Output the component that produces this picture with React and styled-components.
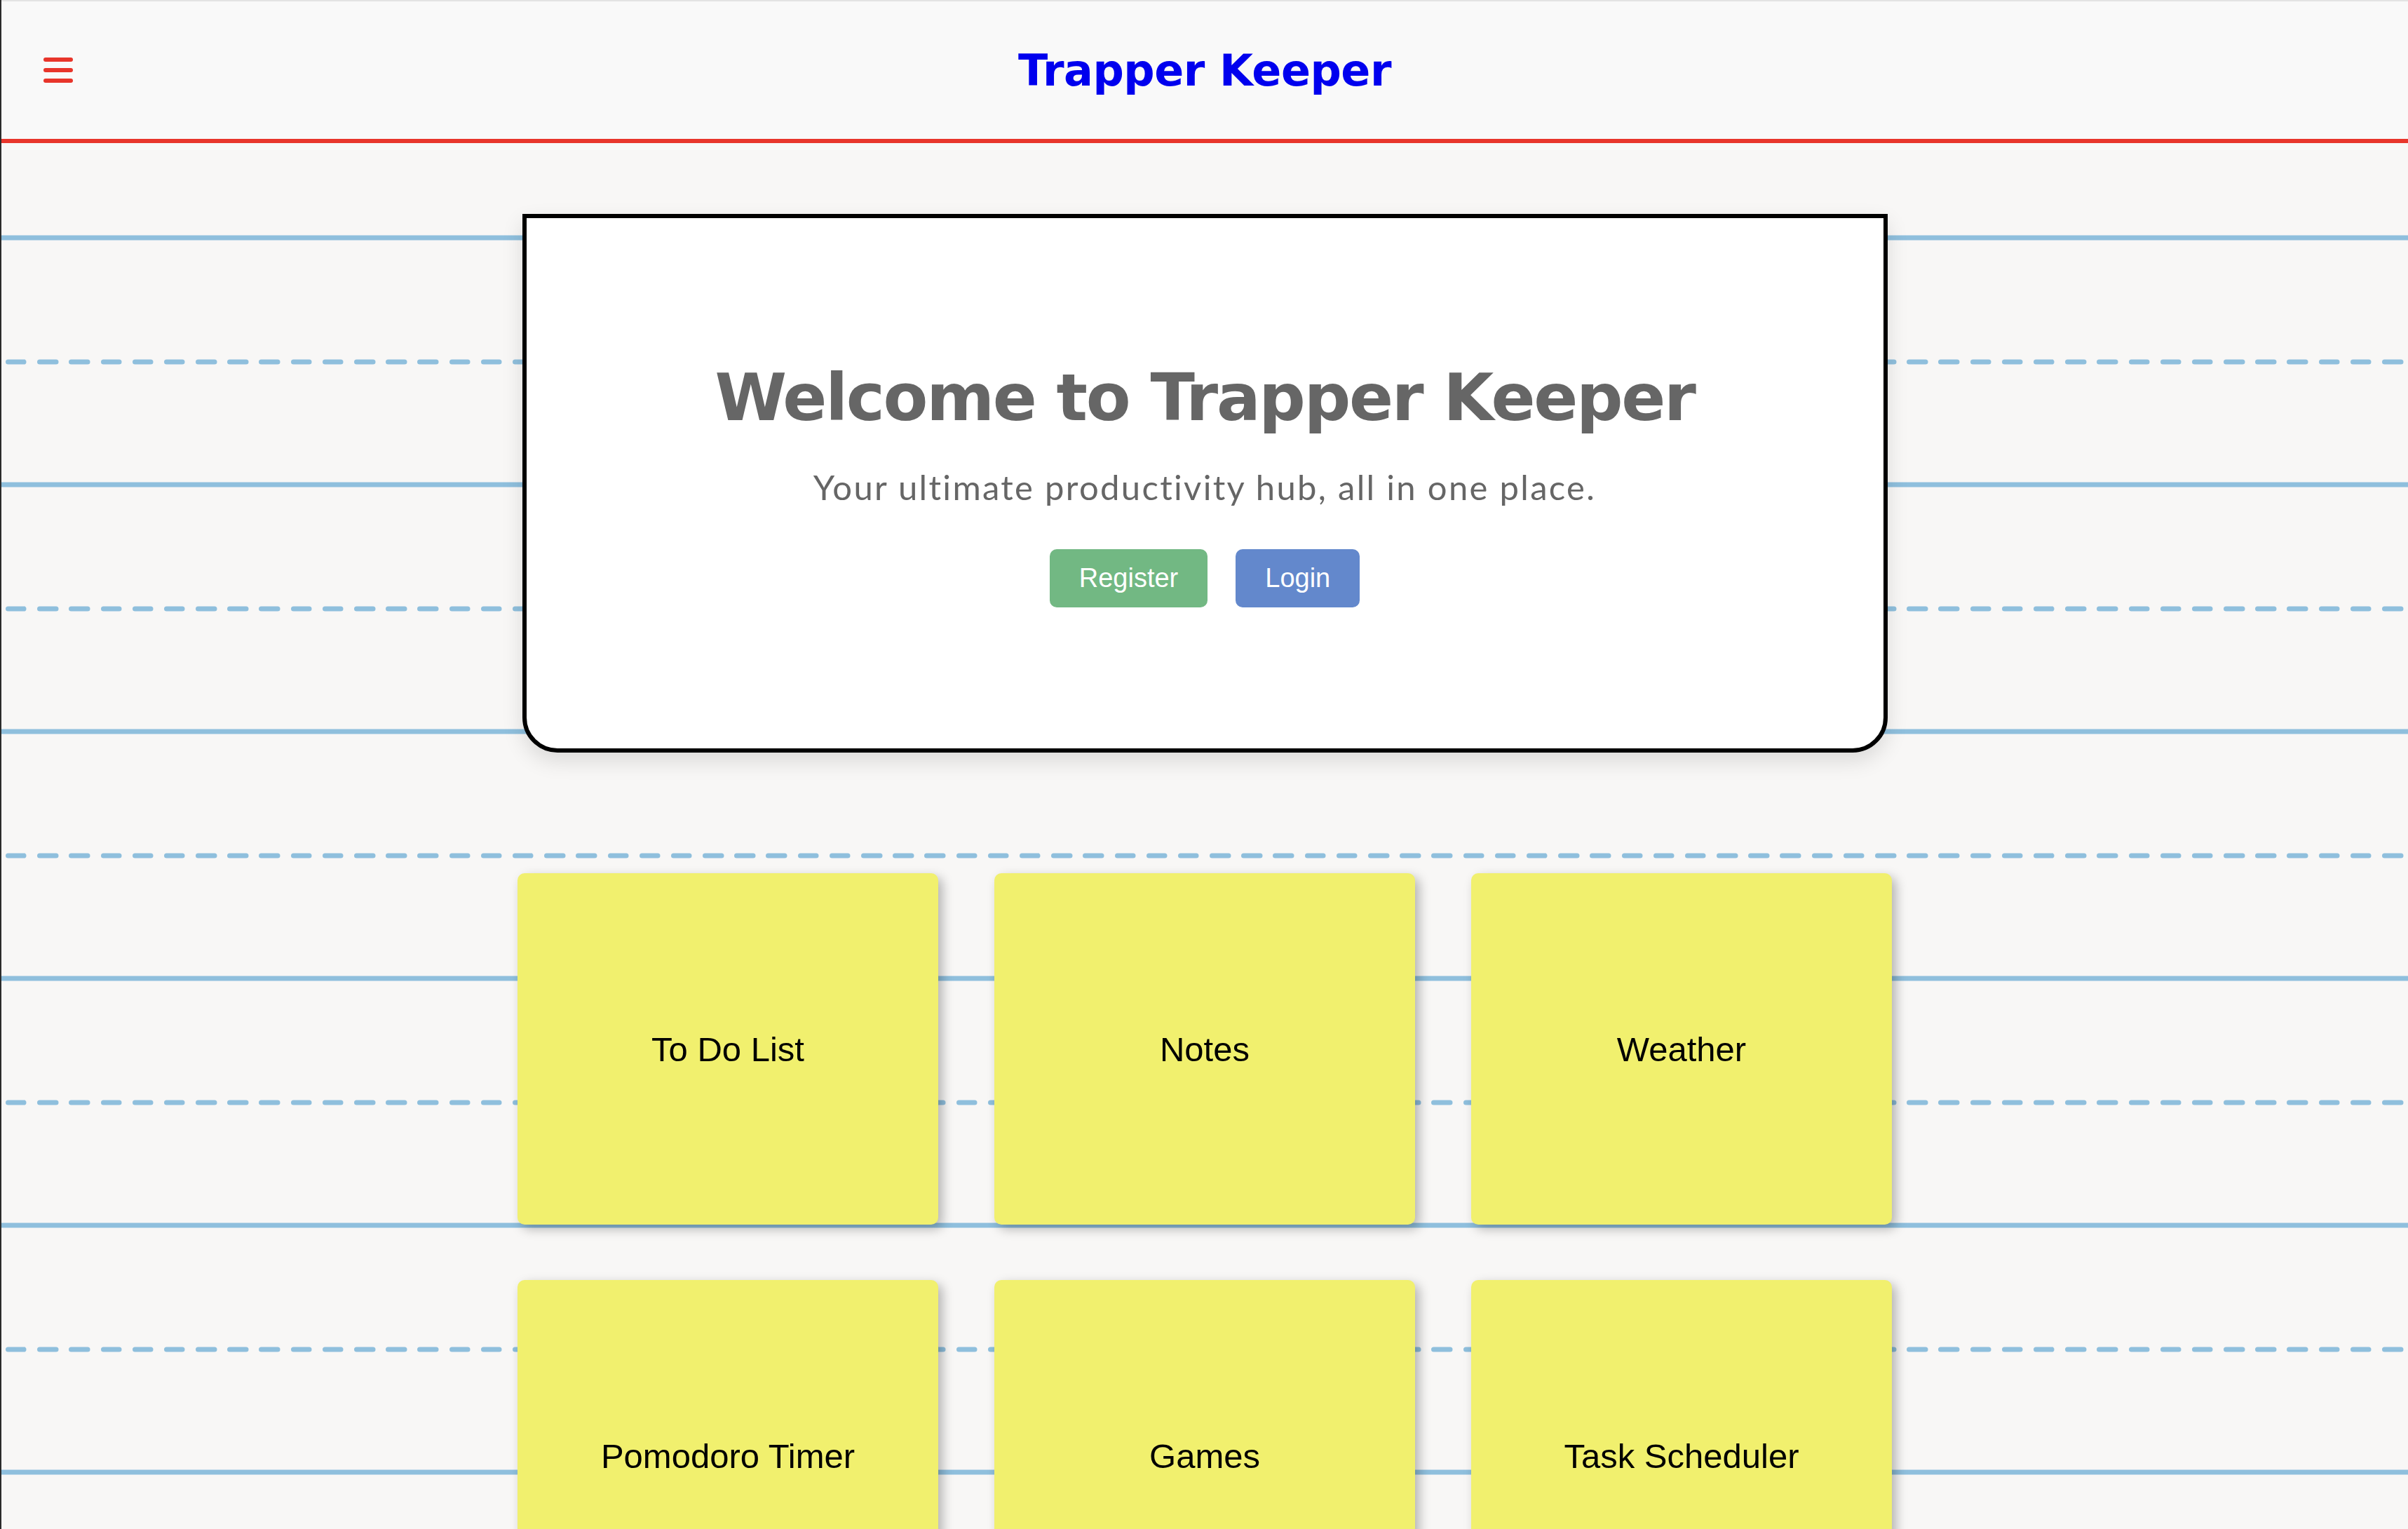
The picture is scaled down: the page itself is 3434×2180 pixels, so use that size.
import React from "react";
import styled, { createGlobalStyle } from "styled-components";

const lineBlue = "#8fbfdd";

const paper = encodeURIComponent(
    `<svg xmlns="http://www.w3.org/2000/svg" width="45.2" height="352">` +
        `<rect x="0" y="335.5" width="45.2" height="7" fill="${lineBlue}"/>` +
        `<rect x="0" y="160.5" width="30" height="7" rx="3.5" fill="${lineBlue}"/>` +
        `</svg>`
);

const GlobalStyle = createGlobalStyle`
    html, body {
        margin: 0;
        padding: 0;
    }
    body {
        background-color: #f8f7f6;
        background-image: url("data:image/svg+xml,${paper}");
        background-repeat: repeat;
        background-position: 8px 0;
        border-left: 2px solid #2b2b2b;
        font-family: "Liberation Sans", Arial, sans-serif;
    }
    * {
        box-sizing: border-box;
    }
`;

const Header = styled.header`
    height: 204px;
    display: grid;
    grid-template-columns: 1fr auto 1fr;
    align-items: center;
    padding: 0 60px;
    background: #f9f9f9;
    border-top: 2px solid #e3e3e3;
    border-bottom: 6px solid #e8352b;
`;

const MenuButton = styled.button`
    width: 42px;
    display: flex;
    flex-direction: column;
    gap: 9px;
    padding: 0;
    border: none;
    background: none;
    cursor: pointer;
    justify-self: start;
`;

const MenuBar = styled.span`
    display: block;
    height: 6px;
    border-radius: 3px;
    background: #e8352b;
`;

const Title = styled.h1`
    margin: 0;
    font-family: "DejaVu Sans", sans-serif;
    font-weight: 700;
    font-size: 62px;
    letter-spacing: -0.5px;
    color: #0000ee;
`;

const Main = styled.main`
    padding: 101px 0 0;
    display: flex;
    flex-direction: column;
    align-items: center;
    gap: 172px;
`;

const WelcomeCard = styled.section`
    width: 1947px;
    height: 768px;
    display: flex;
    flex-direction: column;
    align-items: center;
    justify-content: center;
    background: #fff;
    border: 6px solid #000;
    border-radius: 0 0 50px 50px;
    box-shadow: 0 12px 30px rgba(0, 0, 0, 0.12);
`;

const Heading = styled.h2`
    margin: 0;
    font-family: "DejaVu Sans", sans-serif;
    font-weight: 700;
    font-size: 93px;
    line-height: 1.2;
    letter-spacing: -2.3px;
    color: #666;
`;

const Tagline = styled.p`
    margin: 41px 0 0;
    font-family: Lato, sans-serif;
    font-weight: 400;
    font-size: 49px;
    line-height: 1.2;
    letter-spacing: 2.3px;
    color: #666;
`;

const ButtonRow = styled.div`
    display: flex;
    gap: 40px;
    margin-top: 59px;
`;

const ActionButton = styled.button`
    padding: 20px 42px;
    font-family: "Liberation Sans", Arial, sans-serif;
    font-size: 38px;
    line-height: 43px;
    color: #fff;
    background: ${p => p.$color};
    border: none;
    border-radius: 10px;
    cursor: pointer;
`;

const NoteGrid = styled.div`
    display: grid;
    grid-template-columns: repeat(3, 600px);
    grid-auto-rows: 501px;
    column-gap: 80px;
    row-gap: 79px;
`;

const StickyNote = styled.a`
    display: flex;
    align-items: center;
    justify-content: center;
    background: #f1f06e;
    border-radius: 10px;
    box-shadow: 6px 6px 16px rgba(0, 0, 0, 0.28);
    font-family: "Liberation Sans", Arial, sans-serif;
    font-size: 49px;
    color: #000;
    text-decoration: none;
`;

const tools = ["To Do List", "Notes", "Weather", "Pomodoro Timer", "Games", "Task Scheduler"];

export default function App() {
    return (
        <>
            <GlobalStyle />
            <Header>
                <MenuButton aria-label="Menu">
                    <MenuBar />
                    <MenuBar />
                    <MenuBar />
                </MenuButton>
                <Title>Trapper Keeper</Title>
                <div />
            </Header>
            <Main>
                <WelcomeCard>
                    <Heading>Welcome to Trapper Keeper</Heading>
                    <Tagline>Your ultimate productivity hub, all in one place.</Tagline>
                    <ButtonRow>
                        <ActionButton $color="#72b883">Register</ActionButton>
                        <ActionButton $color="#6388cc">Login</ActionButton>
                    </ButtonRow>
                </WelcomeCard>
                <NoteGrid>
                    {tools.map(name => (
                        <StickyNote key={name} href="#">
                            {name}
                        </StickyNote>
                    ))}
                </NoteGrid>
            </Main>
        </>
    );
}
